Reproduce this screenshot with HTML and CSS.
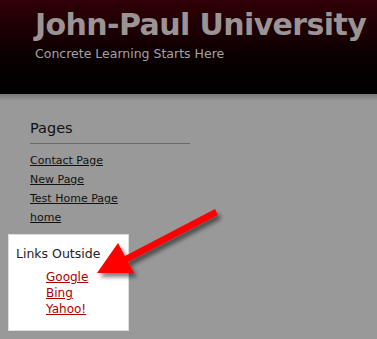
FILE: index.html
```html
<!DOCTYPE html>
<html lang="en">
<head>
    <meta charset="UTF-8">
    <title>John-Paul University</title>
    <link rel="stylesheet" href="styles.css">
</head>
<body>
    <header class="topo">
        <h1 class="titulo">John-Paul University</h1>
        <p class="slogan">Concrete Learning Starts Here</p>
    </header>
    <div class="sombra"></div>

    <div class="lateral">
        <h2 class="paginas">Pages</h2>
        <ul class="lista">
            <li><a href="#">Contact Page</a></li>
            <li><a href="#">New Page</a></li>
            <li><a href="#">Test Home Page</a></li>
            <li><a href="#">home</a></li>
        </ul>
    </div>

    <div class="caixa">
        <h3 class="caixa-titulo">Links Outside</h3>
        <ul class="externos">
            <li><a href="#">Google</a></li>
            <li><a href="#">Bing</a></li>
            <li><a href="#">Yahoo!</a></li>
        </ul>
    </div>

    <!-- seta de anotacao -->
    <svg class="seta" width="377" height="339" viewBox="0 0 377 339">
        <defs>
            <filter id="sombra" x="-20%" y="-20%" width="140%" height="140%">
                <feGaussianBlur in="SourceAlpha" stdDeviation="2"/>
                <feOffset dx="3" dy="4"/>
                <feComponentTransfer><feFuncA type="linear" slope="0.5"/></feComponentTransfer>
                <feMerge><feMergeNode/><feMergeNode in="SourceGraphic"/></feMerge>
            </filter>
        </defs>
        <g filter="url(#sombra)" fill="#ff0000">
            <polygon points="215,209 218,215 126,263 123,257"/>
            <polygon points="97,273 118,243 134,273"/>
        </g>
    </svg>
</body>
</html>
```
FILE: styles.css
```css
* {
    margin: 0;
    padding: 0;
    box-sizing: border-box;
}

body {
    font-family: "DejaVu Sans", sans-serif;
    background-color: #999999;
    width: 377px;
    height: 339px;
    overflow: hidden;
    position: relative;
}

.topo {
    height: 94px;
    padding: 8px 0 0 35px;
    background: linear-gradient(#300006 0%, #0a0001 60%, #000 100%);
}

.titulo {
    font-size: 30px;
    font-weight: bold;
    color: #9c9494;
    letter-spacing: -0.6px;
    line-height: 34px;
}

.slogan {
    margin-top: 4px;
    font-size: 12.5px;
    color: #a8a2a2;
}

.sombra {
    height: 7px;
    background: linear-gradient(#777 0%, #999 100%);
}

.lateral {
    width: 190px;
    padding: 19px 0 0 30px;
}

.paginas {
    font-size: 14.5px;
    font-weight: normal;
    color: #111;
    padding-bottom: 7px;
    border-bottom: 1px solid #6a6a6a;
}

.lista {
    list-style: none;
    margin-top: 7px;
}

.lista li {
    line-height: 19px;
    font-size: 11px;
}

.lista a {
    color: #111;
}

.caixa {
    width: 121px;
    height: 97px;
    margin: 7px 0 0 8px;
    padding: 11px 0 0 7px;
    background: #fff;
    border: 1px solid #ddd;
}

.caixa-titulo {
    font-size: 12.5px;
    font-weight: normal;
    color: #222;
}

.externos {
    list-style: none;
    margin: 8px 0 0 30px;
}

.externos li {
    line-height: 16px;
    font-size: 12px;
}

.externos a {
    color: #aa0000;
}

.seta {
    position: absolute;
    left: 0;
    top: 0;
}
```
